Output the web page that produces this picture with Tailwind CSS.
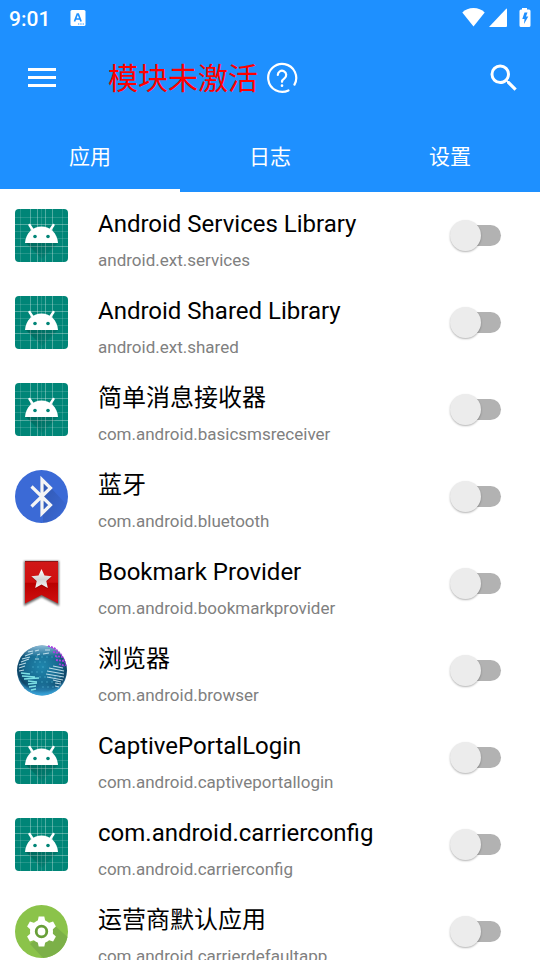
<!DOCTYPE html>
<html lang="zh-CN">
<head>
    <meta charset="UTF-8">
    <meta name="viewport" content="width=device-width, initial-scale=1.0">
    <title>模块管理</title>
    <script src="https://cdn.jsdelivr.net/npm/@tailwindcss/browser@4"></script>
</head>
<body class="flex h-screen flex-col overflow-hidden bg-white font-[Roboto,'Noto_Sans_CJK_SC',sans-serif] text-black">

    <!-- Iconos de las aplicaciones -->
    <svg class="absolute size-0" xmlns="http://www.w3.org/2000/svg" aria-hidden="true">
        <defs>
            <linearGradient id="shade" x1="0" y1="0" x2="1" y2="1">
                <stop offset="0" stop-color="#000" stop-opacity=".22" />
                <stop offset="1" stop-color="#000" stop-opacity="0" />
            </linearGradient>
            <linearGradient id="red" x1="0" y1="0" x2="0" y2="1">
                <stop offset="0" stop-color="#d01818" />
                <stop offset=".5" stop-color="#cf1010" />
                <stop offset=".52" stop-color="#b90000" />
                <stop offset="1" stop-color="#d01010" />
            </linearGradient>
            <linearGradient id="silver" x1="0" y1="0" x2="0" y2="1">
                <stop offset="0" stop-color="#fff" />
                <stop offset=".55" stop-color="#d4d4d4" />
                <stop offset="1" stop-color="#f6f6f6" />
            </linearGradient>
            <radialGradient id="sea" cx=".5" cy=".42" r=".58">
                <stop offset="0" stop-color="#1f86ad" />
                <stop offset=".6" stop-color="#17698f" />
                <stop offset=".85" stop-color="#0d4466" />
                <stop offset="1" stop-color="#3c93c0" />
            </radialGradient>
            <linearGradient id="rim" x1="0" y1="0" x2="0" y2="1">
                <stop offset="0" stop-color="#a8d4ee" stop-opacity=".8" />
                <stop offset=".22" stop-color="#a8d4ee" stop-opacity="0" />
                <stop offset=".75" stop-color="#36a4dc" stop-opacity="0" />
                <stop offset="1" stop-color="#36a4dc" stop-opacity=".95" />
            </linearGradient>
            <filter id="soft" x="-20%" y="-20%" width="140%" height="140%">
                <feGaussianBlur stdDeviation="1" />
            </filter>
        </defs>
        <symbol id="icon-android" viewBox="0 0 53 53">
            <rect width="53" height="53" rx="4" fill="#008577" />
            <path d="M5.500 0v53M26.500 0v53M47.500 0v53M0 8.500h53M0 22.500h53M0 29.500h53M0 44.500h53" stroke="#fff" stroke-opacity=".14" />
            <path d="M15.500 0v53M22.500 0v53M30.500 0v53M37.500 0v53M0 15.500h53M0 37.500h53" stroke="#fff" stroke-opacity=".32" />
            <path d="M11 34h32L27 50z" fill="url(#shade)" />
            <path d="M14.500 16l4 6M38.500 16l-4 6" stroke="#fff" stroke-width="2.400" stroke-linecap="round" />
            <path d="M10 34c.6-9.500 7.500-16.500 16.500-16.500S42.400 24.500 43 34z" fill="#fff" />
            <circle cx="20" cy="27.500" r="1.800" fill="#008577" />
            <circle cx="33" cy="27.500" r="1.800" fill="#008577" />
        </symbol>
        <symbol id="icon-bluetooth" viewBox="0 0 53 53">
            <circle cx="26.500" cy="26.500" r="26.500" fill="#3b6ad6" />
            <path d="M27 9l9 9 15 16c-3 10-12 18-23 19V45z" fill="url(#shade)" opacity=".8" />
            <path d="M16.500 16.500L35.500 35 27 43.500v-34l8.500 8.500-19 18.500" fill="none" stroke="#f5f5f5" stroke-width="3.200" />
        </symbol>
        <symbol id="icon-bookmark" viewBox="0 0 53 53">
            <path d="M9 4h35v45L26.500 40 9 49z" fill="#000" opacity=".6" filter="url(#soft)" />
            <path d="M10 4h33v42.500L26.500 38 10 46.500z" fill="url(#red)" />
            <path d="M10 4.500h33" stroke="#8d1414" />
            <path d="M26.500 13l3 6.500 7.200.8-5.400 4.800 1.500 7-6.300-3.500-6.300 3.500 1.500-7-5.400-4.800 7.200-.8z" fill="#700" opacity=".5" />
            <path d="M26.500 12l3 6.500 7.200.8-5.400 4.800 1.500 7-6.300-3.500-6.300 3.500 1.500-7-5.400-4.800 7.200-.8z" fill="url(#silver)" />
        </symbol>
        <symbol id="icon-globe" viewBox="0 0 53 53">
            <circle cx="27" cy="26.500" r="25" fill="url(#sea)" />
            <circle cx="27" cy="26.500" r="25" fill="url(#rim)" />
            <path d="M21 13h24M19 18h13M17 23h14M16 28h14M24 33h22M26 38h20M27 43h14" stroke="#62c4e0" stroke-opacity=".5" stroke-dasharray="2 3" fill="none" />
            <g fill="none" stroke="#d5edf5" stroke-width="1.100" stroke-opacity=".85">
                <path d="M13 8l5-1M10 12l8-3M7 15l8-2M6 18l8-3M4 21l7-2M4 24l6-2M4 27l5-1M20 7l4-1M30 6h5M28 10l6-1M22 11l3-1M20 15h4" />
                <path d="M38 22l10 2M34 24l15 3M32 27l17 3M31 30l18 3M32 33l16 3M38 36l8 2M40 39l6 1M40 42l4 1" />
            </g>
            <path d="M6 29l9 1M7 32l13 1M9 35l15-1M13 37l9 1M13 40l9-1M14 43l7-1M16 46l5-1" stroke="#7de0e4" stroke-width="1.300" fill="none" />
            <path d="M36 3l5 2M38 8l6 1M40 12l7 1M41 16l8 1M44 20l6 2" stroke="#a83fe0" stroke-width="1.800" stroke-dasharray="2 1" fill="none" />
            <path d="M33 2c9 2 16 9 18 20" stroke="#a83fe0" stroke-width="1.300" stroke-dasharray="2 1" fill="none" />
        </symbol>
        <symbol id="icon-gear" viewBox="0 0 53 53">
            <circle cx="26.500" cy="26.500" r="26.500" fill="#8bc34a" />
            <path d="M39 20l13.500 12C50 44 40 52 28 53L15 39z" fill="#7cb048" />
            <g fill="#fff">
                <circle cx="26.500" cy="26.500" r="11.500" />
                <path id="tooth" d="M22.500 17l1.200-5.500h5.600L30.500 17v19l-1.200 5.500h-5.600L22.500 36z" />
                <use href="#tooth" transform="rotate(60 26.500 26.500)" />
                <use href="#tooth" transform="rotate(120 26.500 26.500)" />
            </g>
            <circle cx="26.500" cy="26.500" r="5.300" fill="#fff" stroke="#689f38" stroke-width="2.800" />
        </symbol>
    </svg>

    <header class="shrink-0 bg-[#1e90ff] text-white">
        <!-- Barra de estado -->
        <div class="flex h-9 items-center pr-2 pl-[9px]">
            <span class="pt-0.5 text-[21px] leading-9 font-medium">9:01</span>
            <svg class="ml-5 size-4" viewBox="0 0 16 16">
                <rect x=".5" width="15" height="16" rx="1.500" fill="#fff" />
                <path d="M4.500 11.500L7.300 4h1l2.800 7.500M5.500 9h4.600" fill="none" stroke="#1e90ff" stroke-width="1.700" />
                <path d="M8 14h1.300M10.300 14h1.300M12.600 14h1.300" stroke="#1e90ff" stroke-width="1.200" />
            </svg>
            <div class="ml-auto flex items-center">
                <svg class="h-5 w-6" viewBox="0 0 24 20" fill="#fff"><path d="M12.500 18.500L1.300 4.500C4 1.500 8 0 12.500 0s8.500 1.500 11.200 4.500z" /></svg>
                <svg class="ml-[3px] size-5" viewBox="0 0 20 20" fill="#fff"><path d="M1 19L18 1q1-1 1 .5V18q0 1-1 1z" /></svg>
                <svg class="ml-[9px] h-5 w-[15px]" viewBox="0 0 15 20">
                    <path d="M5 0h5v1.500h2q1.500 0 1.500 1.500v14.500q0 1.500-1.500 1.500H4q-1.500 0-1.500-1.500V3Q2.500 1.500 4 1.500h1z" fill="#fff" />
                    <path d="M7.500 4.500h3L9 8.500h2.300L7 16l.5-5H5.300z" fill="#1e90ff" />
                </svg>
            </div>
        </div>

        <!-- Barra de herramientas -->
        <div class="flex h-[84px] items-center pr-[18px] pl-6">
            <button type="button" aria-label="菜单" class="size-9">
                <svg class="size-9" viewBox="0 0 36 36" stroke="#fff" stroke-width="3"><path d="M4 9.500h28M4 17.500h28M4 25.500h28" /></svg>
            </button>
            <h1 class="ml-12 pt-0.5 text-[30px] leading-9 font-normal text-[#ff0000]">模块未激活</h1>
            <button type="button" aria-label="帮助" class="ml-2 size-8">
                <svg class="size-8" viewBox="0 0 32 32" fill="none" stroke="#fff" stroke-width="2.200" stroke-linecap="round">
                    <path d="M23.500 27.800A14 14 0 1 1 29 21.500" transform="rotate(5 16 16)" />
                    <path d="M11.800 13a4.200 4.200 0 1 1 6.600 3.400c-1.600 1.100-2.400 1.800-2.400 3.400" />
                    <path d="M16 23.500v.3" stroke-width="2.600" />
                </svg>
            </button>
            <button type="button" aria-label="搜索" class="ml-auto size-9">
                <svg class="size-9" viewBox="0 0 24 24" fill="#fff"><path d="M15.500 14h-.79l-.28-.27A6.471 6.471 0 0 0 16 9.500 6.500 6.500 0 1 0 9.500 16c1.610 0 3.090-.59 4.230-1.570l.27.28v.79l5 4.990L20.490 19l-4.990-5zm-6 0C7.010 14 5 11.990 5 9.500S7.010 5 9.500 5 14 7.010 14 9.500 11.990 14 9.500 14z" /></svg>
            </button>
        </div>

        <!-- Pestañas -->
        <div role="tablist" class="grid h-18 grid-cols-3 text-[21px] leading-8">
            <button type="button" role="tab" aria-selected="true" class="border-b-3 border-white pt-[5px]">应用</button>
            <button type="button" role="tab" aria-selected="false" class="border-b-3 border-transparent pt-[5px]">日志</button>
            <button type="button" role="tab" aria-selected="false" class="border-b-3 border-transparent pt-[5px]">设置</button>
        </div>
    </header>

    <main class="min-h-0 flex-1 overflow-y-auto [scrollbar-width:none]">
        <ul id="apps"></ul>
    </main>

    <script>
        var apps = [
            ['android', 'Android Services Library', 'android.ext.services'],
            ['android', 'Android Shared Library', 'android.ext.shared'],
            ['android', '简单消息接收器', 'com.android.basicsmsreceiver'],
            ['bluetooth', '蓝牙', 'com.android.bluetooth'],
            ['bookmark', 'Bookmark Provider', 'com.android.bookmarkprovider'],
            ['globe', '浏览器', 'com.android.browser'],
            ['android', 'CaptivePortalLogin', 'com.android.captiveportallogin'],
            ['android', 'com.android.carrierconfig', 'com.android.carrierconfig'],
            ['gear', '运营商默认应用', 'com.android.carrierdefaultapp']
        ];

        // Una fila por aplicación, con su interruptor
        document.getElementById('apps').innerHTML = apps.map(function(app, i) {
            return `
            <li class="flex h-[87px] items-center pr-[39px] pl-[15px]">
                <svg class="size-[53px] shrink-0"><use href="#icon-${app[0]}"/></svg>
                <label for="app${i}" class="ml-[30px] min-w-0 flex-1 pt-3">
                    <span class="block truncate text-2xl leading-9">${app[1]}</span>
                    <span class="block truncate text-[17px] leading-9 text-[#808080]">${app[2]}</span>
                </label>
                <input id="app${i}" type="checkbox" role="switch" class="relative h-[31px] w-[51px] shrink-0 appearance-none before:absolute before:top-[5px] before:right-0 before:h-[21px] before:w-10 before:rounded-full before:bg-[#b2b2b2] after:absolute after:top-0 after:left-0 after:size-[31px] after:rounded-full after:bg-[#ececec] after:shadow-[0_1px_2px_rgba(0,0,0,0.3)] checked:before:bg-[#1e90ff]/50 checked:after:left-5 checked:after:bg-[#1e90ff]">
            </li>`;
        }).join('');
    </script>
</body>
</html>
